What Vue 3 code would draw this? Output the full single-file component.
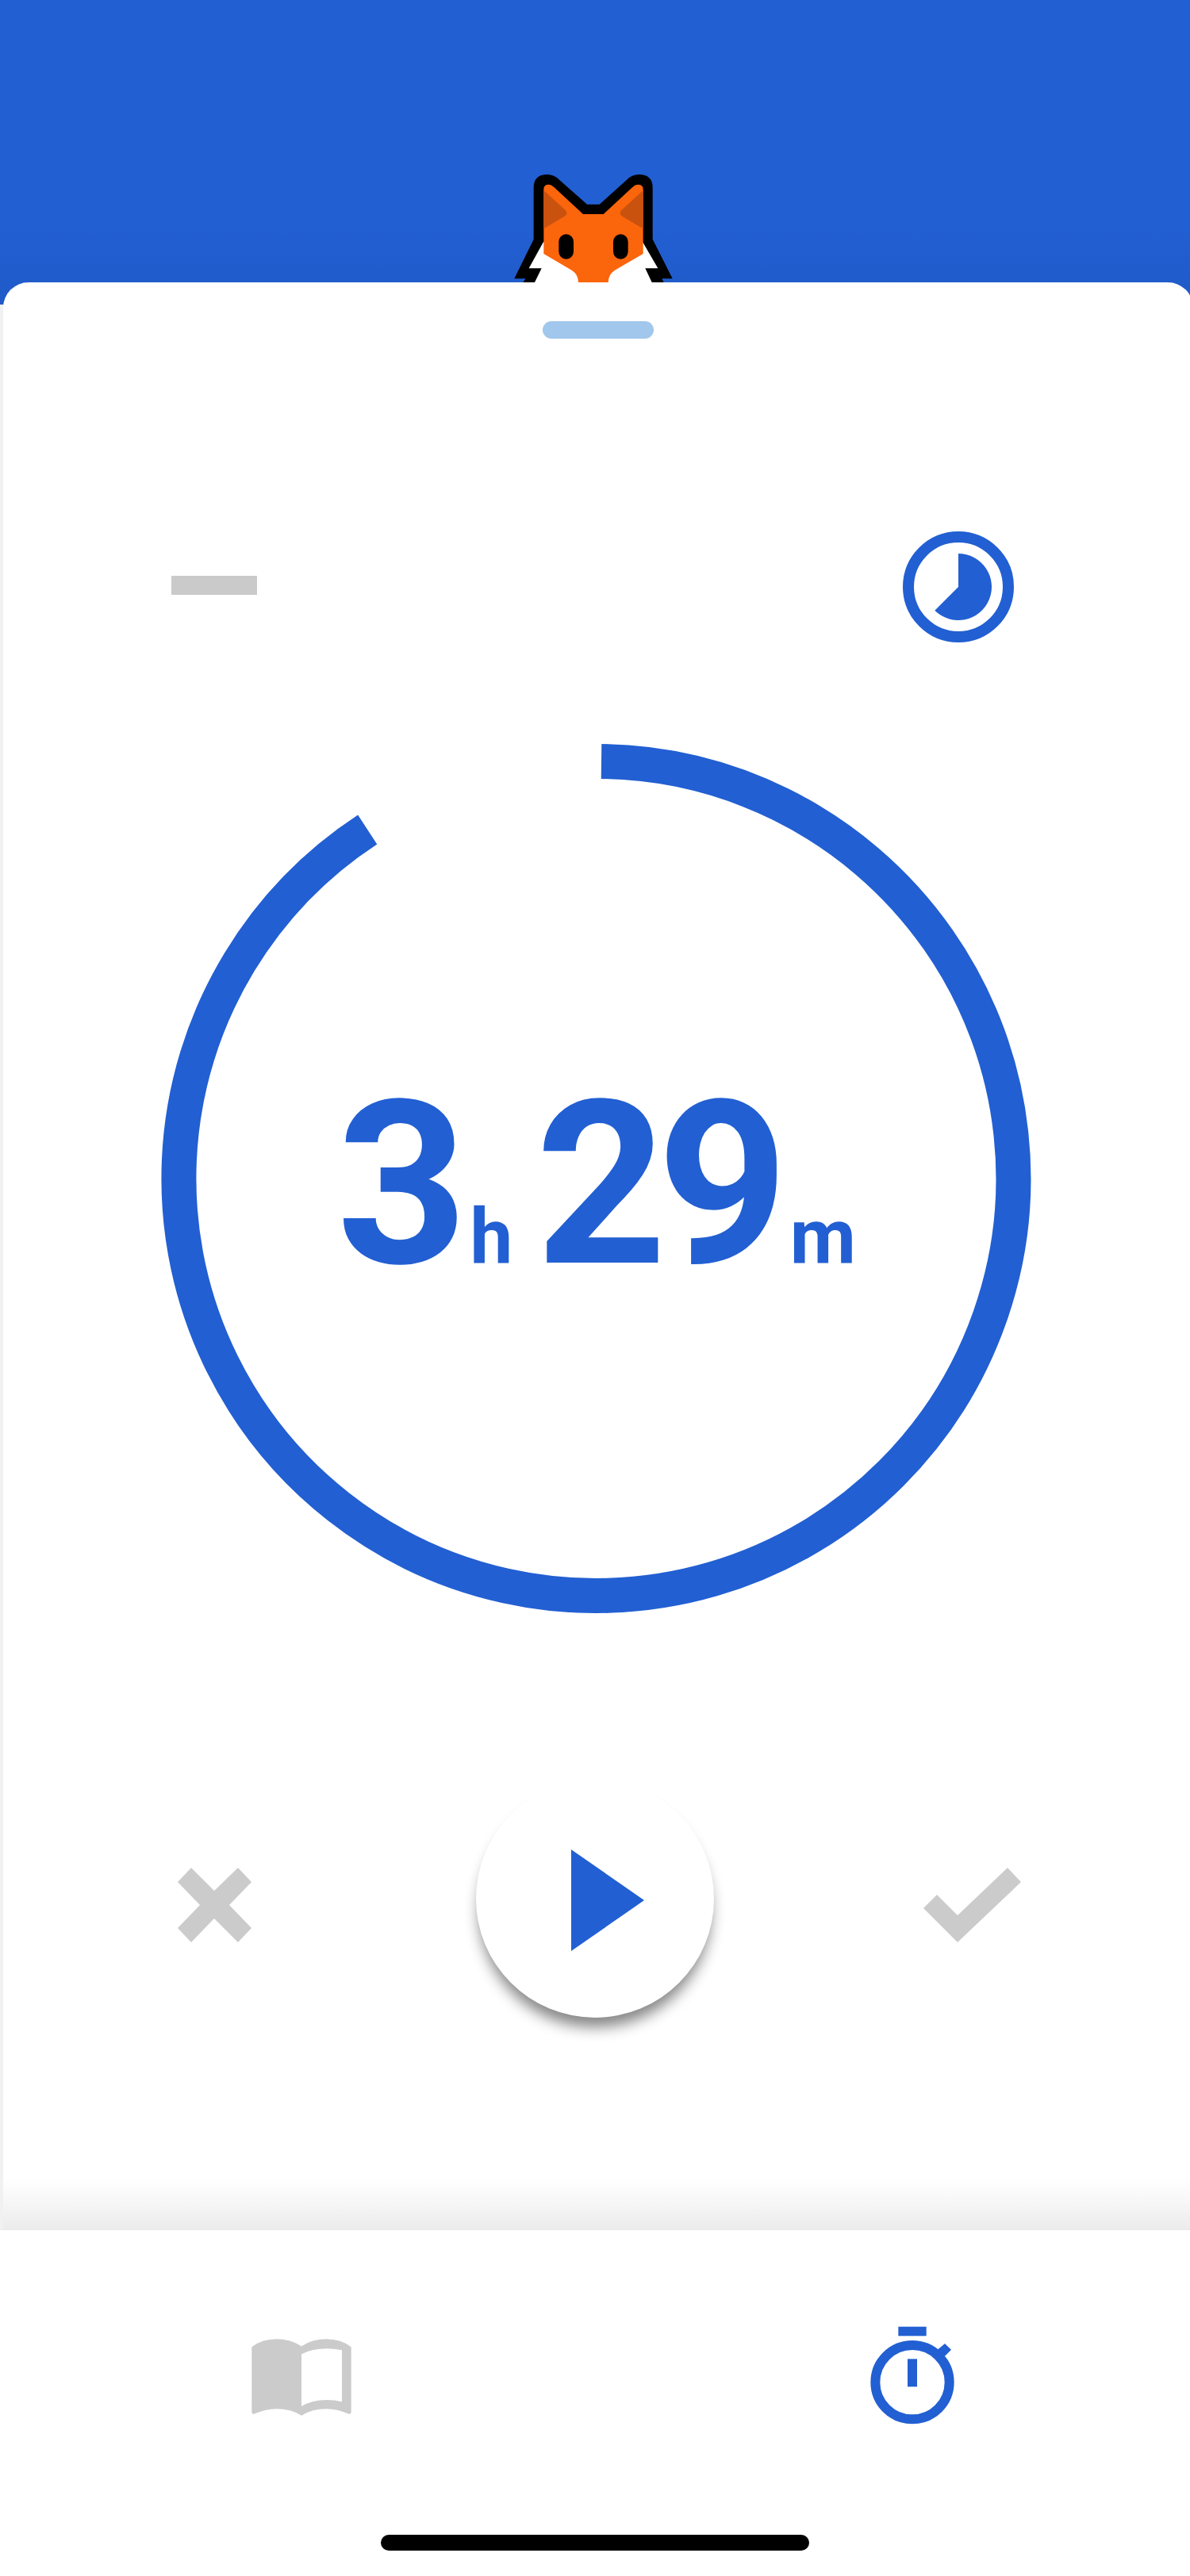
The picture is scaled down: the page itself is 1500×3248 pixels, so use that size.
<script setup>
const hours = 3
const minutes = 29
</script>

<template>
  <div class="page">
    <header class="header">
      <svg class="fox" viewBox="0 0 900 498" aria-hidden="true">
        <path fill="#000" d="M218 140Q218 90 270 90Q295 90 315 110L420 203H467L570 110Q590 90 615 90Q668 90 668 140V335L743 484H703L710 498H178L188 484H145L218 335Z" />
        <path fill="#fff" d="M255 345L200 445H248L222 498H665L640 445H688L630 345Z" />
        <path fill="#FB650C" d="M256 145Q256 128 275 128Q285 128 295 138L405 240H482L592 138Q602 128 612 128Q632 128 632 145V390L525 452Q500 468 500 498H387Q387 468 362 452L256 390Z" />
        <path fill="#C9520F" d="M256 150L338 225Q350 238 335 248L256 295Z" />
        <path fill="#C9520F" d="M632 150L550 225Q538 238 553 248L632 295Z" />
        <rect x="313" y="316" width="56" height="94" rx="28" fill="#000" />
        <rect x="519" y="316" width="56" height="94" rx="28" fill="#000" />
      </svg>
    </header>

    <main class="card">
      <div class="handle"></div>

      <div class="top-row">
        <div class="minus"></div>
        <svg class="clock" viewBox="0 0 140 140" aria-hidden="true">
          <circle cx="70" cy="70" r="63" fill="none" stroke="#225FD2" stroke-width="14" />
          <path fill="#225FD2" d="M70 70V28A42 42 0 1 1 40.3 99.7Z" />
        </svg>
      </div>

      <section class="ring">
        <svg class="ring-svg" viewBox="0 0 1100 1100" aria-hidden="true">
          <path fill="none" stroke="#225FD2" stroke-width="44" d="M557 24.05A526 526 0 1 1 262.2 110" />
        </svg>
        <div class="time">
          <span class="num">{{ hours }}</span><span class="unit unit-h">h</span><span class="num num-min">{{ minutes }}</span><span class="unit unit-m">m</span>
        </div>
      </section>

      <div class="controls">
        <svg class="cancel" viewBox="0 0 93 94" aria-hidden="true">
          <path fill="#CBCBCB" d="M17 0L46 29L76 0L93 18L65 47L93 76L76 94L46 64L17 94L0 76L28 47L0 18Z" />
        </svg>
        <button class="play" type="button" aria-label="Play">
          <svg class="play-icon" viewBox="0 0 92 128" aria-hidden="true">
            <path fill="#225FD2" d="M0 0L92 64L0 128Z" />
          </svg>
        </button>
        <svg class="check" viewBox="0 0 123 94" aria-hidden="true">
          <path fill="#CBCBCB" d="M0 51L17 34L43 60L106 0L123 18L43 94Z" />
        </svg>
      </div>

      <div class="fade"></div>
    </main>

    <nav class="nav">
      <div class="nav-icons">
        <svg class="nav-icon" viewBox="0 0 600 540" aria-hidden="true">
          <path fill="#CBCBCB" fill-rule="evenodd" d="M112 178Q150 148 205 148Q260 148 300 175Q340 148 395 148Q450 148 488 178V422Q488 434 476 430Q435 412 395 412Q340 412 300 437Q260 412 205 412Q165 412 124 430Q112 434 112 422ZM300 205V402Q340 378 395 378Q425 378 453 385V190Q425 184 395 184Q340 184 300 205Z" />
        </svg>
        <svg class="nav-icon" viewBox="0 0 600 540" aria-hidden="true">
          <g fill="#225FD2">
            <rect x="217" y="101" width="106" height="35" />
            <rect x="252" y="223" width="36" height="105" />
            <path d="M365 188L393 165L417 188L393 212Z" />
          </g>
          <circle cx="270" cy="311" r="140" fill="none" stroke="#225FD2" stroke-width="36" />
        </svg>
      </div>
      <div class="home-bar"></div>
    </nav>
  </div>
</template>

<style scoped>
.page {
  width: 1500px;
  height: 3248px;
  overflow: hidden;
  background: #f1f1f1;
  font-family: Roboto, "Liberation Sans", sans-serif;
  color: #225fd2;
}

.header {
  height: 384px;
  box-sizing: border-box;
  padding-bottom: 28px;
  display: flex;
  justify-content: center;
  align-items: flex-end;
  background: linear-gradient(#225fd2 75%, #205ac8);
}

.fox {
  display: block;
  width: 300px;
  height: 166px;
}

.card {
  box-sizing: border-box;
  width: 1500px;
  height: 2456px;
  margin-top: -28px;
  margin-left: 4px;
  border-radius: 32px 32px 0 0;
  background: #fff;
  display: flex;
  flex-direction: column;
}

.handle {
  width: 140px;
  height: 22px;
  margin: 49px auto 0;
  border-radius: 11px;
  background: #a1c7ec;
  flex: none;
}

.top-row {
  flex: none;
  margin-top: 243px;
  padding: 0 226px 0 212px;
  height: 140px;
  display: flex;
  align-items: center;
  justify-content: space-between;
}

.minus {
  width: 108px;
  height: 24px;
  margin-bottom: 4px;
  background: #cacaca;
}

.clock {
  display: block;
  width: 140px;
  height: 140px;
}

.ring {
  flex: none;
  width: 1100px;
  height: 1100px;
  margin: 126px 0 0 197px;
  display: grid;
  place-items: center;
}

.ring-svg {
  grid-area: 1 / 1;
  display: block;
  width: 1100px;
  height: 1100px;
}

.time {
  grid-area: 1 / 1;
  display: flex;
  align-items: baseline;
  margin: 16px 0 0 1px;
  font-weight: 700;
  line-height: 1;
  white-space: nowrap;
}

.num {
  font-size: 288px;
}

.num-min {
  margin-left: 29px;
  letter-spacing: -12px;
}

.unit {
  font-size: 96px;
}

.unit-h {
  margin-left: 3px;
}

.unit-m {
  margin-left: 14px;
}

.controls {
  flex: none;
  margin-top: 208px;
  height: 300px;
  display: grid;
  grid-template-columns: 596px 300px 1fr;
  align-items: center;
}

.cancel {
  display: block;
  width: 93px;
  height: 94px;
  margin: 16px 0 0 220px;
}

.check {
  display: block;
  width: 123px;
  height: 94px;
  margin: 16px 217px 0 0;
  justify-self: end;
}

.play {
  width: 300px;
  height: 300px;
  padding: 0;
  border: 0;
  border-radius: 50%;
  background: #fff;
  box-shadow: 0 16px 18px -4px rgba(0, 0, 0, 0.48);
  display: flex;
  align-items: center;
  justify-content: center;
}

.play-icon {
  display: block;
  width: 92px;
  height: 128px;
  margin-left: 32px;
  margin-top: 4px;
}

.fade {
  flex: none;
  margin-top: auto;
  height: 66px;
  background: linear-gradient(rgba(235, 235, 235, 0), rgba(235, 235, 235, 0.4) 45%, #ebebeb);
}

.nav {
  height: 436px;
  box-sizing: border-box;
  padding-top: 88px;
  background: #fff;
}

.nav-icons {
  display: flex;
  gap: 580px;
  padding-left: 280px;
}

.nav-icon {
  display: block;
  width: 200px;
  height: 180px;
}

.home-bar {
  width: 540px;
  height: 20px;
  margin: 116px auto 0;
  border-radius: 10px;
  background: #000;
}
</style>
